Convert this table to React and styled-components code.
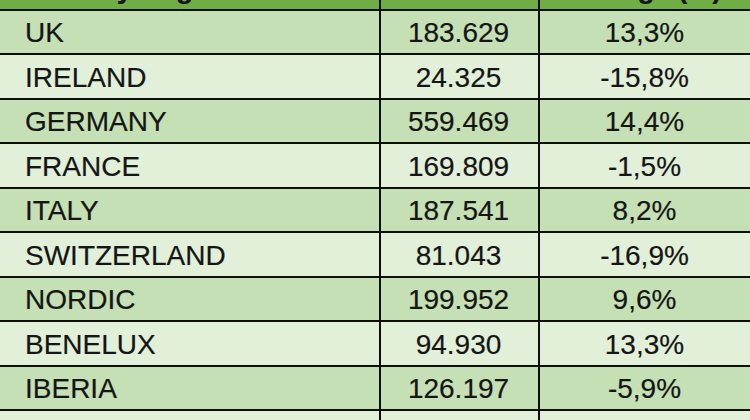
import React from "react";
import styled, { createGlobalStyle } from "styled-components";

const GlobalStyle = createGlobalStyle`
  html, body {
    margin: 0;
    padding: 0;
    background: #e2f0d9;
  }
  body {
    font-family: "Liberation Sans", Arial, sans-serif;
  }
`;

const Viewport = styled.div`
  width: 750px;
  height: 420px;
  overflow: hidden;
`;

const Table = styled.div`
  width: 770px;
  margin-top: -34px;
  margin-left: -1px;
`;

const Row = styled.div`
  display: grid;
  grid-template-columns: 380px 159px 1fr;
  height: 44.5px;
  box-sizing: border-box;
  border-bottom: 2px solid #0c0f0a;
  background: ${({ $variant }) =>
    $variant === "head" ? "#70ad47" : $variant === "dark" ? "#c5e0b4" : "#e2f0d9"};
  color: #151515;
  font-size: 28px;
  font-weight: ${({ $variant }) => ($variant === "head" ? 700 : 400)};
`;

const Cell = styled.div`
  display: flex;
  align-items: center;
  justify-content: ${({ $align }) => ($align === "left" ? "flex-start" : "center")};
  padding-left: ${({ $align }) => ($align === "left" ? "26px" : "0")};
  padding-top: 3px;
  border-left: ${({ $first }) => ($first ? "none" : "2px solid #0c0f0a")};
  white-space: nowrap;
  line-height: 1;
  -webkit-text-stroke: 0.2px #151515;
`;

const NumberCell = styled(Cell)`
  padding-right: 2px;
`;

const PercentCell = styled(Cell)`
  padding-right: 20px;
`;

const rows = [
  ["UK", "183.629", "13,3%"],
  ["IRELAND", "24.325", "-15,8%"],
  ["GERMANY", "559.469", "14,4%"],
  ["FRANCE", "169.809", "-1,5%"],
  ["ITALY", "187.541", "8,2%"],
  ["SWITZERLAND", "81.043", "-16,9%"],
  ["NORDIC", "199.952", "9,6%"],
  ["BENELUX", "94.930", "13,3%"],
  ["IBERIA", "126.197", "-5,9%"],
  ["OTHERS", "", ""],
];

export default function App() {
  return (
    <Viewport>
      <GlobalStyle />
      <Table>
        <Row $variant="head">
          <Cell $first $align="left">Country/Region</Cell>
          <NumberCell>Units</NumberCell>
          <PercentCell>Change (%)</PercentCell>
        </Row>
        {rows.map(([name, units, change], i) => (
          <Row key={name} $variant={i % 2 === 0 ? "dark" : "light"}>
            <Cell $first $align="left">{name}</Cell>
            <NumberCell>{units}</NumberCell>
            <PercentCell>{change}</PercentCell>
          </Row>
        ))}
      </Table>
    </Viewport>
  );
}
